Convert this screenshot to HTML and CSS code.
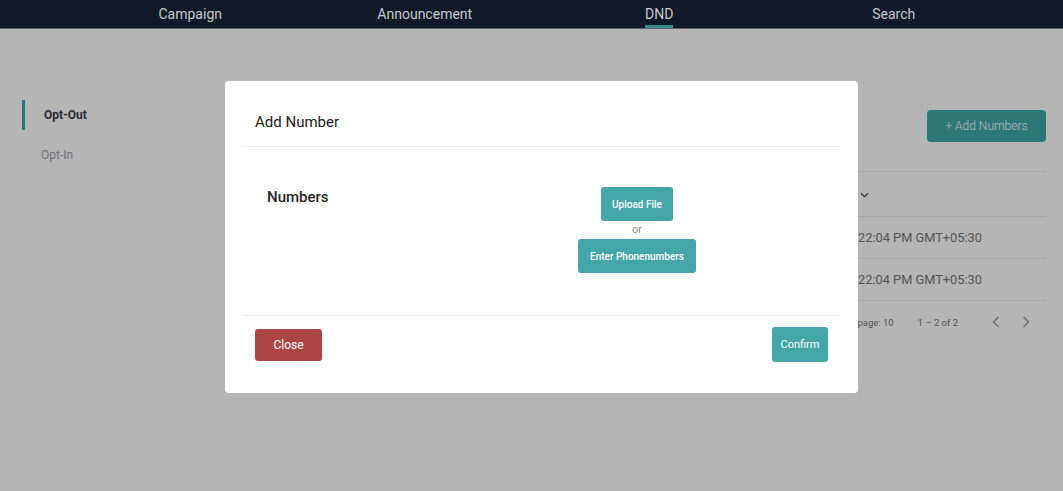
FILE: index.html
```html
<!DOCTYPE html>
<html lang="en">
<head>
<meta charset="utf-8">
<title>DND - Opt-Out</title>
<link rel="stylesheet" href="styles.css">
</head>
<body>
<header class="topnav">
  <nav class="nav-items">
    <a class="nav-item"><span class="nav-label">Campaign</span></a>
    <a class="nav-item"><span class="nav-label">Announcement</span></a>
    <a class="nav-item active"><span class="nav-label">DND</span></a>
    <a class="nav-item"><span class="nav-label">Search</span></a>
  </nav>
</header>

<div class="page">
  <aside class="sidebar">
    <div class="side-item active">Opt-Out</div>
    <div class="side-item">Opt-In</div>
  </aside>

  <main class="main">
    <div class="toolbar">
      <button class="btn-add">+ Add Numbers</button>
    </div>
    <div class="table">
      <div class="trow thead">
        <div class="cell">Phone Number</div>
        <div class="cell cell-date">
          <span>Created At</span>
          <svg class="sort-icon" viewBox="0 0 10 6" width="9" height="6"><polyline points="1,1 5,5 9,1" fill="none" stroke="currentColor" stroke-width="1.6"/></svg>
        </div>
      </div>
      <div class="trow">
        <div class="cell">+919876543210</div>
        <div class="cell cell-date">10/6/2023, 7:22:04 PM GMT+05:30</div>
      </div>
      <div class="trow">
        <div class="cell">+919812345678</div>
        <div class="cell cell-date">10/6/2023, 7:22:04 PM GMT+05:30</div>
      </div>
    </div>
    <div class="pager">
      <span class="pager-rows">Rows per page: 10</span>
      <span class="pager-range">1 – 2 of 2</span>
      <button class="pager-btn" aria-label="Previous page">
        <svg viewBox="0 0 8 12" width="8" height="12"><polyline points="6.5,1 1.5,6 6.5,11" fill="none" stroke="currentColor" stroke-width="1.5"/></svg>
      </button>
      <button class="pager-btn" aria-label="Next page">
        <svg viewBox="0 0 8 12" width="8" height="12"><polyline points="1.5,1 6.5,6 1.5,11" fill="none" stroke="currentColor" stroke-width="1.5"/></svg>
      </button>
    </div>
  </main>
</div>

<div class="backdrop"></div>

<div class="modal-layer">
  <div class="modal" role="dialog" aria-labelledby="modal-title">
    <div class="modal-header">
      <h2 id="modal-title" class="modal-title">Add Number</h2>
    </div>
    <div class="modal-body">
      <div class="field-label">Numbers</div>
      <div class="field-actions">
        <button class="btn btn-teal btn-upload">Upload File</button>
        <span class="or">or</span>
        <button class="btn btn-teal btn-enter">Enter Phonenumbers</button>
      </div>
    </div>
    <div class="modal-footer">
      <button class="btn btn-red btn-close">Close</button>
      <button class="btn btn-teal btn-confirm">Confirm</button>
    </div>
  </div>
</div>
</body>
</html>
```

FILE: styles.css
```css
* { box-sizing: border-box; }

html, body {
  margin: 0;
  height: 100%;
}

body {
  font-family: Roboto, "Noto Sans", "Liberation Sans", sans-serif;
  background: #ffffff;
  color: #333;
  overflow: hidden;
}

/* ---------- top navigation ---------- */
.topnav {
  position: relative;
  z-index: 3;
  height: 29px;
  background: #111827;
  border-bottom: 1px solid #5b606b;
}

.nav-items {
  display: flex;
  height: 28px;
  padding-left: 73px;
}

.nav-item {
  flex: 0 0 234.5px;
  display: flex;
  justify-content: center;
  color: #c6c9ce;
  font-size: 14px;
  line-height: 28px;
  text-decoration: none;
}

.nav-label {
  position: relative;
  display: inline-block;
}

.nav-item.active .nav-label::after {
  content: "";
  position: absolute;
  left: 0;
  right: 0;
  bottom: 0;
  height: 3px;
  background: #3a8b8d;
}

/* ---------- page ---------- */
.page {
  display: flex;
}

.sidebar {
  flex: 0 0 235px;
  padding: 71px 0 0 22px;
}

.side-item {
  height: 30px;
  line-height: 31px;
  font-size: 12px;
  color: #9b9ea6;
  padding-left: 19px;
  margin-bottom: 10px;
}

.side-item.active {
  border-left: 3px solid #43a7a9;
  color: #3b4050;
  font-weight: 700;
}

.main {
  flex: 1;
  padding: 81px 17px 0 0;
}

.toolbar {
  display: flex;
  justify-content: flex-end;
  margin-bottom: 29px;
}

.btn-add {
  height: 32px;
  width: 119px;
  border: 0;
  border-radius: 4px;
  background: #42a9a9;
  color: #ffffff;
  font-family: inherit;
  font-size: 12px;
  font-weight: 300;
}

.table {
  border-top: 1px solid #ececec;
}

.trow {
  display: grid;
  grid-template-columns: 1fr 258px;
  align-items: center;
  height: 42px;
  border-bottom: 1px solid #ececec;
  font-size: 12.8px;
  color: #787878;
}

.thead {
  height: 45px;
  color: #5e5e5e;
  font-weight: 500;
}

.cell-date {
  display: flex;
  align-items: center;
  justify-content: flex-end;
  padding-right: 64px;
  white-space: nowrap;
}

.thead .cell-date {
  justify-content: flex-start;
  padding: 0 0 0 5px;
  gap: 6px;
}

.sort-icon {
  color: #5f5f5f;
  margin-top: 2px;
}

.pager {
  display: flex;
  justify-content: flex-end;
  align-items: center;
  height: 42px;
  font-size: 9.5px;
  color: #777777;
  padding-right: 5px;
}

.pager-rows { margin-right: 24px; }
.pager-range { margin-right: 23px; }

.pager-btn {
  width: 30px;
  height: 30px;
  border: 0;
  background: transparent;
  color: #a0a0a0;
  display: flex;
  align-items: center;
  justify-content: center;
  padding: 0;
}

/* ---------- modal ---------- */
.backdrop {
  position: fixed;
  inset: 0;
  z-index: 2;
  background: rgba(0, 0, 0, 0.29);
}

.modal-layer {
  position: fixed;
  inset: 0;
  z-index: 4;
  display: flex;
  align-items: flex-start;
  padding: 81px 0 0 225px;
}

.modal {
  width: 633px;
  background: #ffffff;
  border-radius: 4px;
  padding: 0 18px;
}

.modal-header {
  padding: 31px 12px 14px;
  border-bottom: 1px solid #ebebeb;
}

.modal-title {
  margin: 0;
  font-size: 15px;
  line-height: 20px;
  font-weight: 400;
  color: #212121;
}

.modal-body {
  display: grid;
  grid-template-columns: 1fr 2fr;
  padding: 40px 18px 42px 24px;
  border-bottom: 1px solid #ebebeb;
}

.field-label {
  font-size: 15px;
  line-height: 20px;
  font-weight: 500;
  color: #262626;
}

.field-actions {
  display: flex;
  flex-direction: column;
  align-items: center;
}

.or {
  font-size: 11px;
  line-height: 18px;
  color: #8a8a8a;
}

.btn {
  border: 0;
  border-radius: 3px;
  color: #ffffff;
  font-family: inherit;
  white-space: nowrap;
  cursor: pointer;
}

.btn-teal { background: #45a6a9; }
.btn-red { background: #ab4644; }

.btn-upload,
.btn-enter {
  height: 34px;
  padding: 0;
  font-size: 10px;
  font-weight: 500;
}

.btn-upload { width: 72px; }
.btn-enter { width: 118px; }

.modal-footer {
  display: flex;
  justify-content: space-between;
  align-items: center;
  padding: 11px 12px 31px;
}

.btn-close {
  width: 67px;
  height: 32px;
  font-size: 12px;
}

.btn-confirm {
  width: 56px;
  height: 35px;
  font-size: 11px;
}
```
